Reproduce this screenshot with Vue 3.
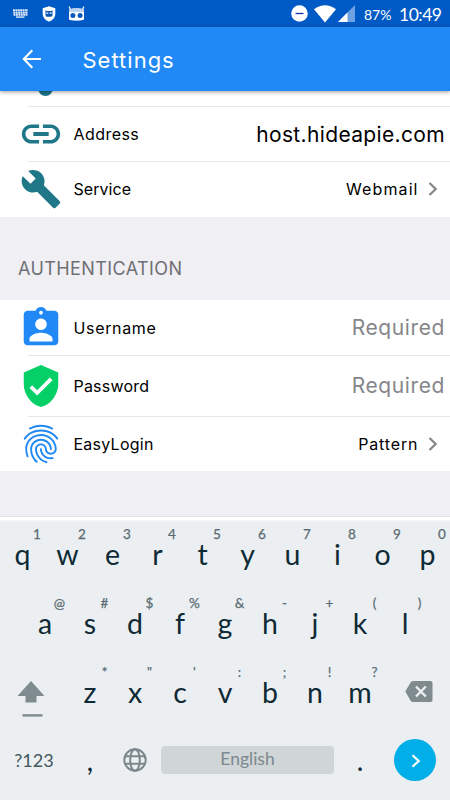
<script setup>
const row1 = [['q', '1'], ['w', '2'], ['e', '3'], ['r', '4'], ['t', '5'], ['y', '6'], ['u', '7'], ['i', '8'], ['o', '9'], ['p', '0']]
const row2 = [['a', '@'], ['s', '#'], ['d', '$'], ['f', '%'], ['g', '&'], ['h', '-'], ['j', '+'], ['k', '('], ['l', ')']]
const row3 = [['z', '*'], ['x', '"'], ['c', "'"], ['v', ':'], ['b', ';'], ['n', '!'], ['m', '?']]
</script>

<template>
  <div class="screen">
    <div class="status">
      <svg class="s-kbd" viewBox="0 0 17 9"><path d="M1 1.2H16M1.3 3.6H16M1.6 5.8H15.4" stroke="#e3edfa" stroke-width="1.9" stroke-dasharray="1.9 .5" fill="none" /><path d="M4 8.1H12.5" stroke="#e3edfa" stroke-width="1.4" /></svg>
      <svg class="s-shield" viewBox="0 0 14 16"><path d="M7 .3 13.3 2.3V8C13.3 11.5 10.5 14.3 7 15.7 3.5 14.3.7 11.5.7 8V2.3Z" fill="#fff" /><path d="M3.5 4.2 5 5H9L10.500 4.200V9.200Q10 10.700 8.700 10.700H5.300Q4 10.700 3.500 9.200Z" fill="#0d55b5" /><path d="M4.300 7.100H6.300M7.800 7.100H9.700" stroke="#fff" stroke-width="1.200" /></svg>
      <svg class="s-cid" viewBox="0 0 17 16"><path d="M1.300 1 2.600 3.500M15.700 1 14.400 3.500" stroke="#fff" stroke-width="1.200" stroke-linecap="round" /><path d="M1 3.500Q8.500 1.200 16 3.500V13.200Q16 14 15 14Q8.500 15.500 2 14Q1 14 1 13.200Z" fill="#fff" /><path d="M1 3.500Q8.500 1.200 16 3.500V6H1Z" fill="#b9d2f1" /><circle cx="4.900" cy="9.600" r="2.500" fill="#0759bd" /><circle cx="12.100" cy="9.600" r="2.500" fill="#0759bd" /></svg>
      <span class="spacer"></span>
      <svg class="s-dnd" viewBox="0 0 17 17"><circle cx="8.500" cy="8.500" r="8.300" fill="#fff" /><path d="M4.500 8.500h8" stroke="#1732a8" stroke-width="1.300" /></svg>
      <svg class="s-wifi" viewBox="0 0 22 18"><path d="M0 4.200Q11-3.800 22 4.200L11 17.600Z" fill="#fff" /></svg>
      <svg class="s-cell" viewBox="0 0 17 17"><path d="M0 17 17 0V17Z" fill="#6ea2e2" /><path d="M0 17 9.500 7.500V17Z" fill="#fff" /></svg>
      <span class="battery">87%</span>
      <span class="clock">10:49</span>
    </div>

    <div class="appbar">
      <svg class="back" viewBox="0 0 20 20"><path d="M19 10H2M10.300 1.300 1.800 10l8.500 8.700" stroke="#fff" stroke-width="2.100" fill="none" /></svg>
      <h1>Settings</h1>
    </div>

    <div class="content">
      <div class="peek"><span class="dot"></span></div>
      <div class="row address">
        <svg class="icon teal" viewBox="0 0 24 24"><path d="M3.900 12c0-1.710 1.390-3.100 3.100-3.100h4V7H7c-2.760 0-5 2.240-5 5s2.240 5 5 5h4v-1.900H7c-1.710 0-3.100-1.390-3.100-3.100zM8 13h8v-2H8v2zm9-6h-4v1.900h4c1.710 0 3.100 1.390 3.100 3.100s-1.390 3.100-3.100 3.100h-4V17h4c2.760 0 5-2.240 5-5s-2.240-5-5-5z" /></svg>
        <span class="label l-address">Address</span>
        <span class="value big v-host">host.hideapie.com</span>
      </div>
      <div class="row service">
        <svg class="icon teal wrench" viewBox="0 0 24 24"><path d="M22.700 19l-9.100-9.100c.9-2.300.4-5-1.500-6.900-2-2-5-2.400-7.400-1.300L9 6 6 9 1.600 4.700C.4 7.100.9 10.100 2.900 12.100c1.900 1.900 4.600 2.400 6.900 1.500l9.100 9.100c.4.400 1 .4 1.400 0l2.300-2.300c.5-.4.5-1.100.1-1.400z" /></svg>
        <span class="label l-service">Service</span>
        <span class="value v-webmail">Webmail</span>
        <svg class="chev" viewBox="0 0 10 14"><path d="M1.500 1 7.700 7l-6.200 6" /></svg>
      </div>
      <div class="section">AUTHENTICATION</div>
      <div class="row username">
        <svg class="icon blue" viewBox="0 0 24 24"><path d="M19 3h-4.180C14.400 1.840 13.300 1 12 1c-1.300 0-2.400.84-2.820 2H5c-1.100 0-2 .9-2 2v14c0 1.100.9 2 2 2h14c1.100 0 2-.9 2-2V5c0-1.100-.9-2-2-2zm-7 0c.55 0 1 .45 1 1s-.45 1-1 1-1-.45-1-1 .45-1 1-1zm0 4c1.660 0 3 1.340 3 3s-1.340 3-3 3-3-1.340-3-3 1.340-3 3-3zm6 12H6v-1.400c0-2 4-3.100 6-3.100s6 1.100 6 3.100V19z" /></svg>
        <span class="label l-username">Username</span>
        <span class="value big hintText">Required</span>
      </div>
      <div class="row password">
        <svg class="icon green" viewBox="0 0 24 24"><path d="M12 1L3 5v6c0 5.550 3.840 10.740 9 12 5.160-1.260 9-6.450 9-12V5l-9-4zm-2 16l-4-4 1.410-1.410L10 14.170l6.590-6.590L18 9l-8 8z" /></svg>
        <span class="label l-password">Password</span>
        <span class="value big hintText">Required</span>
      </div>
      <div class="row easy">
        <svg class="icon blue" viewBox="0 0 24 24"><path d="M17.810 4.470c-.08 0-.16-.02-.23-.06C15.660 3.420 14 3 12.010 3c-1.980 0-3.860.47-5.570 1.410-.24.13-.54.04-.68-.2-.13-.24-.04-.55.2-.68C7.820 2.520 9.860 2 12.010 2c2.130 0 3.990.47 6.030 1.520.25.13.34.43.21.67-.09.18-.26.28-.44.28zM3.500 9.720c-.1 0-.2-.03-.29-.09-.23-.16-.28-.47-.12-.7.99-1.400 2.250-2.500 3.750-3.270C9.980 4.040 14 4.030 17.150 5.650c1.500.77 2.760 1.860 3.750 3.250.16.22.11.54-.12.7-.23.16-.54.11-.7-.12-.9-1.260-2.040-2.250-3.390-2.940-2.870-1.470-6.540-1.470-9.400.01-1.360.7-2.500 1.700-3.400 2.960-.08.14-.23.21-.39.21zm6.250 12.070c-.13 0-.26-.05-.35-.15-.87-.87-1.340-1.430-2.010-2.640-.69-1.230-1.050-2.730-1.050-4.340 0-2.970 2.540-5.390 5.660-5.390s5.660 2.420 5.660 5.390c0 .28-.22.5-.5.5s-.5-.22-.5-.5c0-2.420-2.090-4.390-4.660-4.390-2.570 0-4.660 1.970-4.660 4.390 0 1.440.32 2.770.93 3.850.64 1.150 1.080 1.640 1.850 2.420.19.2.19.51 0 .71-.11.1-.24.15-.37.15zm7.170-1.850c-1.190 0-2.240-.3-3.100-.89-1.490-1.010-2.380-2.650-2.380-4.390 0-.28.22-.5.5-.5s.5.22.5.5c0 1.410.72 2.740 1.940 3.560.71.48 1.540.71 2.540.71.24 0 .64-.03 1.040-.1.27-.05.53.13.58.41.05.27-.13.53-.41.58-.57.11-1.070.12-1.210.12zM14.910 22c-.04 0-.09-.01-.13-.02-1.590-.44-2.630-1.030-3.720-2.100-1.400-1.390-2.170-3.240-2.170-5.220 0-1.620 1.380-2.940 3.080-2.940 1.700 0 3.080 1.320 3.080 2.940 0 1.070.93 1.940 2.080 1.940s2.080-.87 2.080-1.940c0-3.770-3.250-6.830-7.250-6.830-2.840 0-5.440 1.580-6.610 4.030-.39.81-.59 1.760-.59 2.800 0 .78.07 2.010.67 3.610.1.26-.03.55-.29.64-.26.1-.55-.04-.64-.29-.49-1.310-.73-2.610-.73-3.960 0-1.200.23-2.290.68-3.240 1.330-2.790 4.280-4.600 7.510-4.600 4.550 0 8.250 3.510 8.250 7.830 0 1.620-1.380 2.940-3.080 2.940s-3.080-1.320-3.080-2.940c0-1.070-.93-1.940-2.080-1.940s-2.080.87-2.080 1.940c0 1.710.66 3.310 1.870 4.510.95.94 1.860 1.460 3.270 1.850.27.07.42.35.35.61-.05.23-.26.38-.47.38z" /></svg>
        <span class="label l-easy">EasyLogin</span>
        <span class="value v-pattern">Pattern</span>
        <svg class="chev" viewBox="0 0 10 14"><path d="M1.500 1 7.700 7l-6.200 6" /></svg>
      </div>
    </div>

    <div class="keyboard">
      <div class="keys">
        <div v-for="k in row1" :key="k[0]" class="key">{{ k[0] }}<span class="alt">{{ k[1] }}</span></div>
      </div>
      <div class="keys inset">
        <div v-for="k in row2" :key="k[0]" class="key">{{ k[0] }}<span class="alt">{{ k[1] }}</span></div>
      </div>
      <div class="keys">
        <div class="side">
          <svg class="shift" viewBox="0 0 28 37"><path d="M14 0 27.500 15H19.500V21.500H8.500V15H.5Z" /><path d="M5.500 33.200h20v2.400h-20z" /></svg>
        </div>
        <div v-for="k in row3" :key="k[0]" class="key">{{ k[0] }}<span class="alt">{{ k[1] }}</span></div>
        <div class="side right">
          <svg class="bksp" viewBox="0 0 28 21"><path d="M8 0H25.500Q27.500 0 27.500 2V19Q27.500 21 25.500 21H8Q6.500 21 5.500 19.500L.3 10.500 5.500 1.500Q6.500 0 8 0Z" fill="#7f8b8f" /><path d="m11 5.500 9.800 10M20.800 5.500l-9.800 10" stroke="#eceff1" stroke-width="2.400" /></svg>
        </div>
      </div>
      <div class="bottom">
        <span class="sym">?123</span>
        <span class="punct">,</span>
        <svg class="globe" viewBox="0 0 24 24"><g fill="none" stroke="#7b878c" stroke-width="2"><circle cx="12" cy="12" r="10.700" /><ellipse cx="12" cy="12" rx="4.800" ry="10.700" /><path d="M2 8.300H22M2 15.700H22" /></g></svg>
        <span class="space">English</span>
        <span class="punct dotkey">.</span>
        <span class="enter"><svg viewBox="0 0 10 14"><path d="M1.500 1.200 7.700 7l-6.200 5.800" fill="none" stroke="#fff" stroke-width="2.200" /></svg></span>
      </div>
    </div>
  </div>
</template>

<style>
body { margin: 0; overflow: hidden; }
</style>

<style scoped>
.screen { width: 450px; height: 800px; display: flex; flex-direction: column; overflow: hidden; background: #efeff4; font-family: Inter, "Liberation Sans", sans-serif; color: #000; }
svg { display: block; flex: none; }
.status { height: 27px; flex: none; background: #005ac5; display: flex; align-items: center; padding: 0 10px 0 12px; box-sizing: border-box; color: #fff; font-family: Lato, sans-serif; }
.s-kbd { width: 17px; height: 9px; }
.s-shield { width: 14px; height: 16px; margin-left: 12.500px; }
.s-cid { width: 17px; height: 16px; margin-left: 12px; }
.spacer { flex: 1; }
.s-dnd { width: 17px; height: 17px; margin-right: 6.500px; }
.s-wifi { width: 22px; height: 18px; margin-right: 2px; }
.s-cell { width: 17px; height: 17px; margin-right: 9px; }
.battery { font-size: 14px; width: 35px; padding-top: 1px; }
.clock { font-size: 17.500px; letter-spacing: -.5px; width: 41px; white-space: nowrap; padding-top: 2px; }
.appbar { position: relative; z-index: 1; height: 64px; flex: none; background: #2089f6; display: flex; align-items: center; box-shadow: 0 1px 4px rgba(0, 0, 0, .4); }
.back { width: 20px; height: 20px; margin-left: 22px; }
h1 { margin: 1px 0 0 40.500px; font-size: 22px; font-weight: 400; color: #fff; letter-spacing: 1px; }
.peek { height: 16px; background: #fff; padding-left: 37.500px; }
.dot { display: block; width: 15px; height: 15px; border-radius: 50%; background: #1c7586; margin-top: -10.500px; }
.content { flex: none; height: 425px; display: flex; flex-direction: column; }
.row, .section, .peek { flex: none; box-sizing: border-box; }
.row { background: #fff; display: flex; align-items: center; position: relative; padding: 0 5px 0 18px; }
.address, .service, .username, .password, .easy { height: 55px; }
.address, .service { padding-bottom: 1px; }
.password { height: 61px; }
.address::before, .service::before, .password::before, .easy::before { content: ""; position: absolute; top: -1px; left: 28px; right: 0; height: 1px; background: #e6e6e6; }
.password::before, .easy::before { top: 0; }
.icon { width: 46px; height: 46px; }
.wrench { width: 42px; height: 42px; margin: 0 2px; }
.teal { fill: #1f7788; }
.blue { fill: #2089f6; }
.green { fill: #05cf67; }
.label { font-size: 16px; margin-left: 9.500px; flex: 1; }
.l-address { letter-spacing: .45px; }
.l-service { letter-spacing: .05px; }
.l-username { letter-spacing: .65px; }
.l-password { letter-spacing: .2px; }
.l-easy { letter-spacing: .25px; }
.value { font-size: 16px; white-space: nowrap; }
.big { font-size: 21px; }
.v-host { letter-spacing: .35px; }
.v-webmail { letter-spacing: 1.100px; margin-right: -1.100px; }
.v-pattern { letter-spacing: .85px; margin-right: -.85px; }
.hintText { color: #85858a; letter-spacing: .6px; }
.chev { width: 10px; height: 14px; margin: 0 7.500px 0 10px; }
.chev path { fill: none; stroke: #858589; stroke-width: 2.200; }
.section { height: 83px; padding: 41px 0 0 18px; font-size: 18px; line-height: 22px; letter-spacing: .4px; color: #6f6f75; }
.keyboard { flex: 1; box-sizing: border-box; padding-top: 6px; border-top: 1px solid #e2e2e5; background: linear-gradient(#fff 0 3px, #f4f5f6 3px 5px, #eceff1 5px); font-family: Lato, sans-serif; color: #0f2a35; }
.keys { height: 69px; display: flex; }
.inset { padding-left: 22.500px; }
.key { position: relative; width: 45px; flex: none; text-align: center; font-size: 28.500px; line-height: 62px; }
.alt { position: absolute; left: 27px; width: 20px; top: 2px; font-size: 13.500px; line-height: 18px; color: #5a6c73; -webkit-text-stroke: .25px #5a6c73; }
.side { width: 67.500px; flex: none; }
.shift { width: 28px; height: 37px; margin: 20px 0 0 17px; fill: #7f8b8f; }
.bksp { width: 28px; height: 21px; margin: 20px 0 0 22px; }
.bottom { height: 60px; display: flex; align-items: center; }
.sym { font-size: 18px; width: 68px; text-align: center; color: #43565e; }
.punct { width: 44px; text-align: center; font-size: 28px; }
.globe { width: 24px; height: 24px; margin: 0 14.500px 0 10.500px; }
.space { width: 173px; height: 28px; line-height: 26px; border-radius: 4px; background: #d0d5d8; color: #7c898e; font-size: 17.500px; text-align: center; }
.dotkey { width: 45px; margin-left: 3.500px; }
.enter { width: 42px; height: 42px; border-radius: 50%; background: #00afe7; margin-left: 11.500px; display: flex; align-items: center; justify-content: center; }
.enter svg { width: 10px; height: 14px; margin: 2px 0 0 2px; }
</style>
